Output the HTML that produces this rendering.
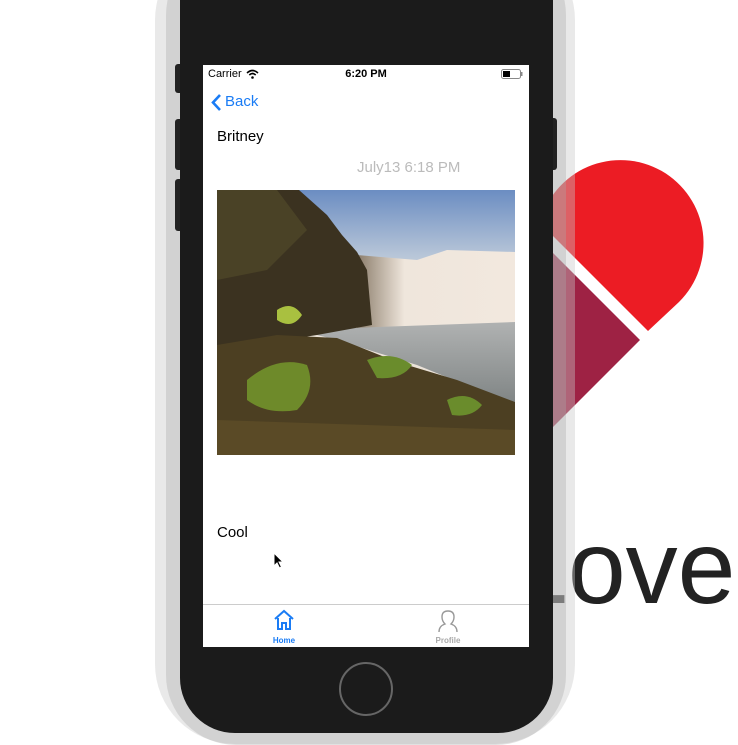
<!DOCTYPE html>
<html><head><meta charset="utf-8"><style>
*{margin:0;padding:0;box-sizing:border-box}
body{width:738px;height:744px;overflow:hidden;background:#fff;position:relative;font-family:"Liberation Sans",sans-serif}
.abs{position:absolute}
</style></head><body>
<div class="abs" style="left:510px;top:516px;font-size:104px;color:#222;line-height:1">Love</div>
<svg class="abs" style="left:0;top:0" width="738" height="744">
<path d="M648,331 L679,302 A83,83 0 1 0 540,223 Z" fill="#ec1c24"/>
<path d="M640,340 L545,245 L545,435 Z" fill="#9e2244"/>
</svg>
<div class="abs" style="left:155px;top:-60px;width:420px;height:804px;border-radius:80px;background:rgba(200,200,200,0.4)"></div>
<div class="abs" style="left:166px;top:-55px;width:400px;height:800px;border-radius:70px;background:rgba(170,170,170,0.35)"></div>
<div class="abs" style="left:175px;top:64px;width:8px;height:29px;border-radius:3px;background:#222"></div>
<div class="abs" style="left:175px;top:119px;width:8px;height:51px;border-radius:3px;background:#222"></div>
<div class="abs" style="left:175px;top:179px;width:8px;height:52px;border-radius:3px;background:#222"></div>
<div class="abs" style="left:549px;top:118px;width:8px;height:52px;border-radius:3px;background:#222"></div>
<div class="abs" style="left:180px;top:-60px;width:373px;height:793px;border-radius:55px;background:#1b1b1b"></div>
<div class="abs" style="left:339px;top:662px;width:54px;height:54px;border-radius:50%;border:2px solid #666"></div>
<div class="abs" style="left:203px;top:65px;width:326px;height:582px;background:#fff">
  <div class="abs" style="left:5px;top:3px;font-size:11px;color:#000">Carrier</div>
  <svg class="abs" style="left:43px;top:4px" width="13" height="10"><path d="M1,4 Q6.5,-1 12,4" stroke="#000" stroke-width="1.6" fill="none"/><path d="M3.3,6 Q6.5,3 9.7,6" stroke="#000" stroke-width="1.6" fill="none"/><circle cx="6.5" cy="8.5" r="1.3" fill="#000"/></svg>
  <div class="abs" style="left:0;width:326px;top:3px;text-align:center;font-size:11px;font-weight:bold;color:#000">6:20 PM</div>
  <svg class="abs" style="left:298px;top:4px" width="24" height="11"><rect x="0.5" y="0.5" width="19" height="9" rx="2" fill="none" stroke="#888"/><rect x="2" y="2" width="7" height="6" fill="#000"/><rect x="20" y="3" width="1.5" height="4" fill="#888"/></svg>
  <svg class="abs" style="left:7px;top:28px" width="12" height="20"><path d="M10,2 L3,9.5 L10,17" stroke="#1a7cf5" stroke-width="2.6" fill="none"/></svg>
  <div class="abs" style="left:22px;top:28px;font-size:15px;color:#1a7cf5">Back</div>
  <div class="abs" style="left:14px;top:63px;font-size:15px;color:#000">Britney</div>
  <div class="abs" style="left:154px;top:94px;font-size:15px;color:#bbb">July13 6:18 PM</div>
  <svg class="abs" style="left:14px;top:125px" width="298" height="265">
    <defs>
      <linearGradient id="sky" x1="0" y1="0" x2="0" y2="1"><stop offset="0" stop-color="#6b8dc2"/><stop offset="0.25" stop-color="#b8c6d8"/><stop offset="0.45" stop-color="#ece4da"/><stop offset="1" stop-color="#e8e0d6"/></linearGradient>
      <linearGradient id="fall" x1="0" y1="0" x2="1" y2="0"><stop offset="0" stop-color="#8a7c6a"/><stop offset="0.3" stop-color="#efe6dc"/><stop offset="1" stop-color="#f2e8de"/></linearGradient>
      <linearGradient id="water" x1="0" y1="0" x2="0" y2="1"><stop offset="0" stop-color="#b0b2b2"/><stop offset="1" stop-color="#7f8484"/></linearGradient>
    </defs>
    <rect width="298" height="265" fill="url(#sky)"/>
    <path d="M140,65 L200,70 L230,60 L298,62 L298,140 L140,140 Z" fill="url(#fall)"/>
    <path d="M80,140 L298,132 L298,215 L200,175 L120,150 Z" fill="url(#water)"/>
    <path d="M0,0 L82,0 L110,25 L125,45 L140,62 L150,80 L155,135 L100,145 L0,160 Z" fill="#3b3220"/>
    <path d="M0,0 L60,0 L90,40 L50,80 L0,90 Z" fill="#4a4226"/>
    <path d="M0,155 L60,145 L120,148 L180,172 L240,190 L298,212 L298,265 L0,265 Z" fill="#4c3f22"/>
    <path d="M30,190 Q60,165 90,175 Q100,200 80,220 Q50,225 30,210 Z" fill="#6e8a2a"/>
    <path d="M60,120 Q75,110 85,125 Q75,140 60,130 Z" fill="#a9c040"/>
    <path d="M150,170 Q175,160 195,175 Q185,190 160,188 Z" fill="#6a8c2c"/>
    <path d="M230,210 Q250,200 265,215 Q255,228 235,225 Z" fill="#6a8c2c"/>
    <path d="M0,230 L298,240 L298,265 L0,265 Z" fill="#5a4a26"/>
  </svg>
  <div class="abs" style="left:14px;top:459px;font-size:15px;color:#000">Cool</div>
  <svg class="abs" style="left:70px;top:487px" width="12" height="18"><path d="M1,1 L1,14 L4,11 L6.5,16 L8.5,15 L6,10 L10,10 Z" fill="#000" stroke="#fff" stroke-width="1"/></svg>
  <div class="abs" style="left:0;top:539px;width:326px;height:1px;background:#ccc"></div>
  <svg class="abs" style="left:70px;top:544px" width="22" height="22"><path d="M2,10 L11,2 L20,10" stroke="#1a7cf5" stroke-width="2" fill="none"/><path d="M5,9 L5,20 L9,20 L9,14 L13,14 L13,20 L17,20 L17,9" stroke="#1a7cf5" stroke-width="2" fill="none"/></svg>
  <div class="abs" style="left:56px;top:571px;width:50px;text-align:center;font-size:8px;font-weight:bold;color:#1a7cf5">Home</div>
  <svg class="abs" style="left:233px;top:544px" width="24" height="24"><path d="M3,23 Q3,17 9,15 Q6,12 6,8 Q6,2 12,2 Q18,2 18,8 Q18,12 15,15 Q21,17 21,23" stroke="#999" stroke-width="1.4" fill="none"/></svg>
  <div class="abs" style="left:220px;top:571px;width:50px;text-align:center;font-size:8px;font-weight:bold;color:#aaa">Profile</div>
</div>
</body></html>
